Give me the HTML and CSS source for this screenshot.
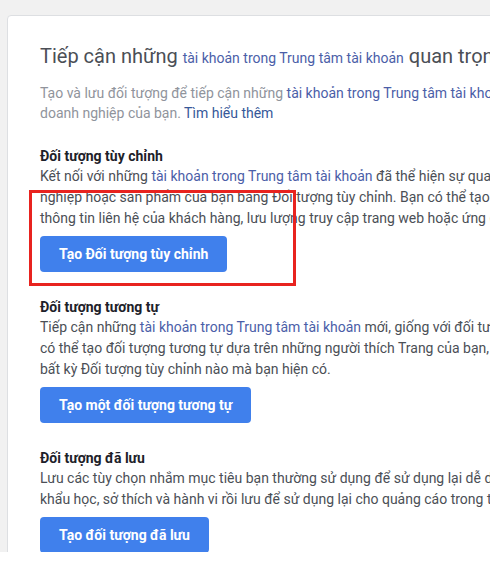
FILE: index.html
```html
<!DOCTYPE html>
<html lang="vi">
<head>
<meta charset="utf-8">
<link rel="stylesheet" href="styles.css">
</head>
<body>
<div class="frame">
  <div class="card">
    <h1 class="title">Tiếp cận những <a class="link small">tài khoản trong Trung tâm tài khoản</a> quan trọng nhất</h1>
    <p class="subtitle">
      <span class="line">Tạo và lưu đối tượng để tiếp cận những <a class="link">tài khoản trong Trung tâm tài khoản</a> quan trọng nhất với</span>
      <span class="line">doanh nghiệp của bạn. <a class="more">Tìm hiểu thêm</a></span>
    </p>

    <section class="section first">
      <h2 class="heading">Đối tượng tùy chỉnh</h2>
      <p class="body">
        <span class="line">Kết nối với những <a class="link">tài khoản trong Trung tâm tài khoản</a> đã thể hiện sự quan tâm đến doanh</span>
        <span class="line">nghiệp hoặc sản phẩm của bạn bằng Đối tượng tùy chỉnh. Bạn có thể tạo đối tượng từ</span>
        <span class="line">thông tin liên hệ của khách hàng, lưu lượng truy cập trang web hoặc ứng dụng di động.</span>
      </p>
      <button class="btn">Tạo Đối tượng tùy chỉnh</button>
      <div class="highlight"></div>
    </section>

    <section class="section">
      <h2 class="heading">Đối tượng tương tự</h2>
      <p class="body">
        <span class="line">Tiếp cận những <a class="link">tài khoản trong Trung tâm tài khoản</a> mới, giống với đối tượng quan trọng nhất. Bạn</span>
        <span class="line">có thể tạo đối tượng tương tự dựa trên những người thích Trang của bạn, khách truy cập hoặc</span>
        <span class="line">bất kỳ Đối tượng tùy chỉnh nào mà bạn hiện có.</span>
      </p>
      <button class="btn">Tạo một đối tượng tương tự</button>
    </section>

    <section class="section">
      <h2 class="heading">Đối tượng đã lưu</h2>
      <p class="body">
        <span class="line">Lưu các tùy chọn nhắm mục tiêu bạn thường sử dụng để sử dụng lại dễ dàng. Chọn thông tin nhân</span>
        <span class="line">khẩu học, sở thích và hành vi rồi lưu để sử dụng lại cho quảng cáo trong tương lai.</span>
      </p>
      <button class="btn">Tạo đối tượng đã lưu</button>
    </section>
  </div>
</div>
</body>
</html>
```

FILE: styles.css
```css
html, body {
  margin: 0;
  padding: 0;
  background: #ffffff;
}

body {
  font-family: Roboto, "Liberation Sans", Arial, sans-serif;
  width: 490px;
  height: 570px;
  overflow: hidden;
}

.frame {
  height: 552px;
  overflow: hidden;
  background: #f1f1f1;
  padding: 15px 0 0 7px;
  box-sizing: border-box;
}

.card {
  width: 900px;
  height: 700px;
  background: #ffffff;
  border: 1px solid #dddfe2;
  border-radius: 4px 0 0 0;
  padding: 28px 0 0 32px;
  box-sizing: border-box;
}

.line {
  display: block;
  white-space: nowrap;
}

.title {
  margin: 0;
  font-size: 20px;
  font-weight: 400;
  line-height: 24px;
  color: #4b4f56;
  white-space: nowrap;
}

.link {
  color: #4b5ea8;
  text-decoration: none;
}

.small {
  font-size: 14px;
}

.more {
  color: #365899;
  text-decoration: none;
}

.subtitle {
  margin: 13px 0 0 0;
  font-size: 14px;
  line-height: 20px;
  color: #90949c;
}

.section {
  position: relative;
  margin-top: 23px;
}

.section + .section {
  margin-top: 25px;
}

.heading {
  margin: 0;
  font-size: 14px;
  font-weight: 700;
  line-height: 20px;
  color: #1d2129;
}

.body {
  margin: 0;
  font-size: 14px;
  line-height: 21px;
  color: #4b4f56;
}

.btn {
  display: block;
  margin-top: 7px;
  height: 36px;
  padding: 0 19px;
  border: none;
  border-radius: 4px;
  background: #4080ec;
  color: #ffffff;
  font-family: Roboto, "Liberation Sans", Arial, sans-serif;
  font-size: 14px;
  font-weight: 700;
}

.highlight {
  position: absolute;
  left: -11px;
  top: 44px;
  width: 267px;
  height: 96px;
  border: 3px solid #e8231f;
  box-sizing: border-box;
  pointer-events: none;
}
```
